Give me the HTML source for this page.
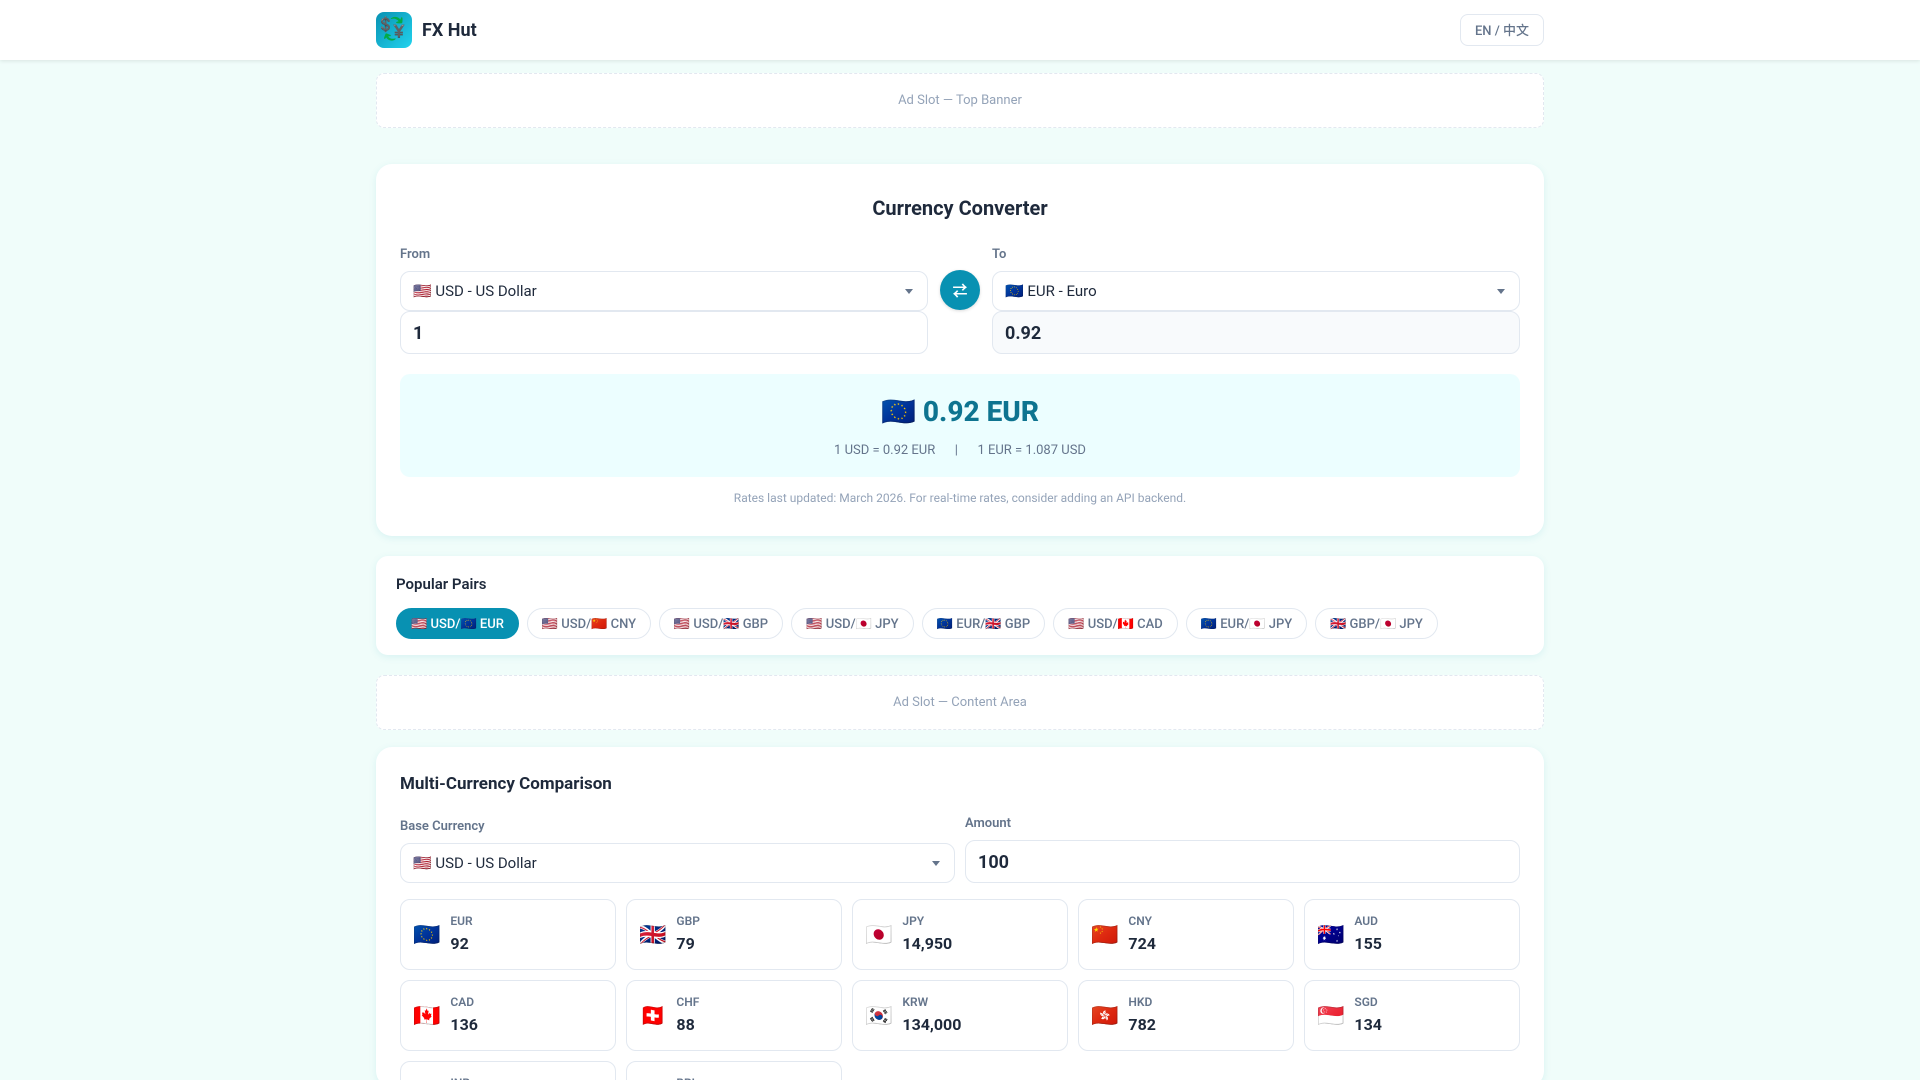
<!DOCTYPE html>
<html lang="en"><head><meta charset="utf-8"><title>FX Hut</title>
<style>
*{box-sizing:border-box;margin:0;padding:0}
html,body{width:1920px;height:1080px;overflow:hidden}
body{background:#f0fdfa;font-family:Roboto,"Liberation Sans","Noto Sans CJK SC",sans-serif;color:#1e293b;position:relative}
.a{position:absolute}
.t{position:absolute;white-space:nowrap;line-height:1}
.header{left:0;top:0;width:1920px;height:60px;background:#fff;box-shadow:0 1px 4px rgba(0,0,0,.1)}
.logo{left:376px;top:12px;width:36px;height:36px;border-radius:8px;background:linear-gradient(135deg,#0891b2,#22d3ee);display:flex;align-items:center;justify-content:center;font-size:22px;line-height:1;padding-right:2px}
.lang{left:1460px;top:14px;width:84px;height:32px;border:1px solid #e2e8f0;border-radius:8px;font-size:13px;font-weight:500;color:#64748b;display:flex;align-items:center;justify-content:center;padding-bottom:2px}
.ad{left:376px;width:1168px;height:55px;background:#fff;border:1px dashed #e2e8f0;border-radius:8px;font-size:13px;color:#94a3b8;display:flex;align-items:center;justify-content:center}
.card{background:#fff;box-shadow:0 2px 8px rgba(8,145,178,.1)}
.box{position:absolute;background:#fff;border:1.5px solid #e2e8f0;border-radius:10px;display:flex;align-items:center;padding:0 12px;white-space:nowrap}
.sel{font-size:15px;height:40px}
.sel:after{content:"";position:absolute;right:14px;top:17px;border-left:4px solid transparent;border-right:4px solid transparent;border-top:5px solid #64748b}
.inp{font-size:18px;font-weight:700;padding-top:2px}
.lab{font-size:13px;font-weight:600;color:#64748b}
.pill{position:absolute;top:608px;height:31px;border:1px solid #e2e8f0;border-radius:20px;font-size:13px;font-weight:500;color:#64748b;display:flex;align-items:center;justify-content:center;white-space:nowrap;background:#fff;padding-top:1px}
.pill.on{background:#0891b2;border-color:#0891b2;color:#fff}
.cell{position:absolute;width:216px;height:71px;border:1px solid #e2e8f0;border-radius:10px;background:#fff}
.cell .f{position:absolute;left:12px;top:23px;font-size:22px;line-height:1.2}
.cell .c{position:absolute;left:49.4px;top:14px;font-size:12px;font-weight:600;color:#64748b;line-height:1.2}
.cell .v{position:absolute;left:49.4px;top:33px;font-size:16px;font-weight:700;line-height:1.4}
</style></head><body>
<div class="a header"></div>
<div class="a logo">💱</div>
<div class="t" style="left:422px;top:21px;font-size:18px;font-weight:700;line-height:20px">FX Hut</div>
<div class="a lang">EN / 中文</div>

<div class="a ad" style="top:73px">Ad Slot — Top Banner</div>

<div class="a card" style="left:376px;top:164px;width:1168px;height:372px;border-radius:16px"></div>
<div class="t" style="left:376px;width:1168px;top:197px;text-align:center;font-size:20px;font-weight:700;line-height:22px">Currency Converter</div>
<div class="t lab" style="left:400px;top:248px">From</div>
<div class="t lab" style="left:992px;top:248px">To</div>
<div class="box sel" style="left:400px;top:271px;width:528px">🇺🇸 USD - US Dollar</div>
<div class="box sel" style="left:992px;top:271px;width:528px">🇪🇺 EUR - Euro</div>
<div class="a" style="left:940px;top:270px;width:40px;height:40px;border-radius:50%;background:#0891b2;color:#fff;font-size:15px;font-weight:700;display:flex;align-items:center;justify-content:center;box-shadow:0 1px 3px rgba(0,0,0,.15)">⇄</div>
<div class="box inp" style="left:400px;top:311px;width:528px;height:43px">1</div>
<div class="box inp" style="left:992px;top:311px;width:528px;height:43px;background:#f8fafc">0.92</div>

<div class="a" style="left:400px;top:374px;width:1120px;height:103px;background:#ecfeff;border-radius:10px"></div>
<div class="t" style="left:400px;width:1120px;top:394px;text-align:center;font-size:28px;font-weight:800;color:#0e7490;line-height:36px">🇪🇺 0.92 EUR</div>
<div class="t" style="left:400px;width:1120px;top:443px;font-size:13px;color:#64748b;line-height:16px;display:flex;justify-content:center"><span>1 USD = 0.92 EUR</span><span style="margin:0 19.5px">|</span><span>1 EUR = 1.087 USD</span></div>
<div class="t" style="left:376px;width:1168px;top:491px;text-align:center;font-size:12px;color:#94a3b8;line-height:14px">Rates last updated: March 2026. For real-time rates, consider adding an API backend.</div>

<div class="a card" style="left:376px;top:556px;width:1168px;height:99px;border-radius:12px"></div>
<div class="t" style="left:396px;top:576px;font-size:15px;font-weight:600;line-height:17px">Popular Pairs</div>
<div class="pill on" style="left:396px;width:123px">🇺🇸 USD/🇪🇺 EUR</div>
<div class="pill" style="left:527px;width:124px">🇺🇸 USD/🇨🇳 CNY</div>
<div class="pill" style="left:659px;width:124px">🇺🇸 USD/🇬🇧 GBP</div>
<div class="pill" style="left:791px;width:123px">🇺🇸 USD/🇯🇵 JPY</div>
<div class="pill" style="left:922px;width:123px">🇪🇺 EUR/🇬🇧 GBP</div>
<div class="pill" style="left:1053px;width:125px">🇺🇸 USD/🇨🇦 CAD</div>
<div class="pill" style="left:1186px;width:121px">🇪🇺 EUR/🇯🇵 JPY</div>
<div class="pill" style="left:1315px;width:123px">🇬🇧 GBP/🇯🇵 JPY</div>

<div class="a ad" style="top:675px">Ad Slot — Content Area</div>

<div class="a card" style="left:376px;top:747px;width:1168px;height:340px;border-radius:16px"></div>
<div class="t" style="left:400px;top:774px;font-size:17px;font-weight:700;line-height:20px">Multi-Currency Comparison</div>
<div class="t lab" style="left:400px;top:820px">Base Currency</div>
<div class="t lab" style="left:965px;top:817px">Amount</div>
<div class="box sel" style="left:400px;top:843px;width:555px">🇺🇸 USD - US Dollar</div>
<div class="box inp" style="left:965px;top:840px;width:555px;height:43px">100</div>

<div class="cell" style="left:400px;top:899px"><span class="f">🇪🇺</span><span class="c">EUR</span><span class="v">92</span></div>
<div class="cell" style="left:626px;top:899px"><span class="f">🇬🇧</span><span class="c">GBP</span><span class="v">79</span></div>
<div class="cell" style="left:852px;top:899px"><span class="f">🇯🇵</span><span class="c">JPY</span><span class="v">14,950</span></div>
<div class="cell" style="left:1078px;top:899px"><span class="f">🇨🇳</span><span class="c">CNY</span><span class="v">724</span></div>
<div class="cell" style="left:1304px;top:899px"><span class="f">🇦🇺</span><span class="c">AUD</span><span class="v">155</span></div>
<div class="cell" style="left:400px;top:980px"><span class="f">🇨🇦</span><span class="c">CAD</span><span class="v">136</span></div>
<div class="cell" style="left:626px;top:980px"><span class="f">🇨🇭</span><span class="c">CHF</span><span class="v">88</span></div>
<div class="cell" style="left:852px;top:980px"><span class="f">🇰🇷</span><span class="c">KRW</span><span class="v">134,000</span></div>
<div class="cell" style="left:1078px;top:980px"><span class="f">🇭🇰</span><span class="c">HKD</span><span class="v">782</span></div>
<div class="cell" style="left:1304px;top:980px"><span class="f">🇸🇬</span><span class="c">SGD</span><span class="v">134</span></div>
<div class="cell" style="left:400px;top:1061px"><span class="f">🇮🇳</span><span class="c">INR</span><span class="v">8,310</span></div>
<div class="cell" style="left:626px;top:1061px"><span class="f">🇧🇷</span><span class="c">BRL</span><span class="v">497</span></div>
</body></html>
